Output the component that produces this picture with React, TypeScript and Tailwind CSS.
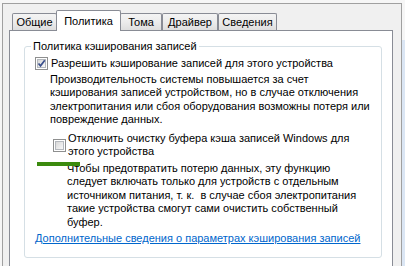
import type { ReactNode } from "react";

type TabProps = {
  readonly label: string;
  readonly width: string;
  readonly active?: boolean;
  readonly className?: string;
};

function Tab({ label, width, active, className }: TabProps) {
  if (active) {
    return (
      <div
        className={`relative z-10 flex h-[21px] items-start justify-center rounded-t-[2px] border border-b-0 border-[#898c95] bg-white pt-[2px] ${width} ${className ?? ""}`}
      >
        {label}
      </div>
    );
  }
  return (
    <div
      className={`mb-px flex h-[17px] items-center justify-center rounded-t-[2px] border border-b-0 border-[#898c95] bg-linear-to-b from-[#f4f4f4] via-[#ececec] to-[#dedede] pt-px ${width} ${className ?? ""}`}
    >
      {label}
    </div>
  );
}

function CheckBox({ checked }: { readonly checked?: boolean }) {
  return (
    <span className="flex h-[13px] w-[13px] shrink-0 items-center justify-center border border-[#8e8f8f] bg-white">
      <span className="relative flex h-[9px] w-[9px] items-center justify-center border border-[#b4b8bd] bg-linear-to-br from-[#d8d8d8] to-[#f8f8f8]">
        {checked && (
          <svg viewBox="0 0 9 9" className="absolute -left-px -top-px h-[9px] w-[9px]">
            <path d="M1.5 4.5 L3.5 6.8 L7.8 1.2" fill="none" stroke="#3a4f8c" strokeWidth="1.7" />
          </svg>
        )}
      </span>
    </span>
  );
}

function Lines({ children, className }: { readonly children: ReactNode; readonly className?: string }) {
  return <div className={`whitespace-nowrap leading-[13.5px] ${className ?? ""}`}>{children}</div>;
}

export default function App() {
  return (
    <div className="flex h-[266px] w-[405px] overflow-hidden bg-[#f6f6f6] font-['Liberation_Sans',Arial,sans-serif] text-[11px] text-black">
      <div className="mt-[3px] ml-[2px] flex w-[400px] shrink-0 flex-col border-x border-t border-[#a0a0a0] bg-[#f0f0f0]">
        <div className="relative z-10 mt-[6px] ml-[9px] flex h-[21px] items-end">
          <Tab label="Общие" width="w-[45px]" />
          <Tab label="Политика" width="w-[65px]" active className="-ml-px" />
          <Tab label="Тома" width="w-[42px]" className="-ml-px" />
          <Tab label="Драйвер" width="w-[56px]" />
          <Tab label="Сведения" width="w-[59px]" />
        </div>
        <div className="-mt-px ml-[6px] w-[384px] flex-1 border-x border-t border-[#898c95] bg-white">
          <fieldset className="relative mt-[8px] ml-[14px] w-[358px] rounded-[3px] border border-[#d5dfe5] pb-[11px]">
            <legend className="ml-[6px] px-[2px] leading-[14px]">Политика кэширования записей</legend>
            <div className="mt-[4px] ml-[10px] flex items-center gap-[3px]">
              <CheckBox checked />
              <span className="leading-[13.5px]">Разрешить кэширование записей для этого устройства</span>
            </div>
            <Lines className="mt-[2px] ml-[25px]">
              <div>Производительность системы повышается за счет</div>
              <div>кэширования записей устройством, но в случае отключения</div>
              <div>электропитания или сбоя оборудования возможны потеря или</div>
              <div>повреждение данных.</div>
            </Lines>
            <div className="mt-[5px] ml-[28px] flex items-center gap-[2px]">
              <CheckBox />
              <Lines>
                <div>Отключить очистку буфера кэша записей Windows для</div>
                <div>этого устройства</div>
              </Lines>
            </div>
            <div className="absolute top-[109px] left-[12px] h-[4px] w-[43px] bg-[#3b8a0e]" />
            <Lines className="mt-[3px] ml-[42px]">
              <div>Чтобы предотвратить потерю данных, эту функцию</div>
              <div>следует включать только для устройств с отдельным</div>
              <div>источником питания, т. к.&nbsp; в случае сбоя электропитания</div>
              <div>такие устройства смогут сами очистить собственный</div>
              <div>буфер.</div>
            </Lines>
            <a href="#" className="mt-[3px] ml-[10px] block leading-[13.5px] whitespace-nowrap text-[#0066cc] underline">
              Дополнительные сведения о параметрах кэширования записей
            </a>
          </fieldset>
        </div>
      </div>
      <div className="mt-[40px] flex-1 bg-[#dbe6f4]" />
    </div>
  );
}
